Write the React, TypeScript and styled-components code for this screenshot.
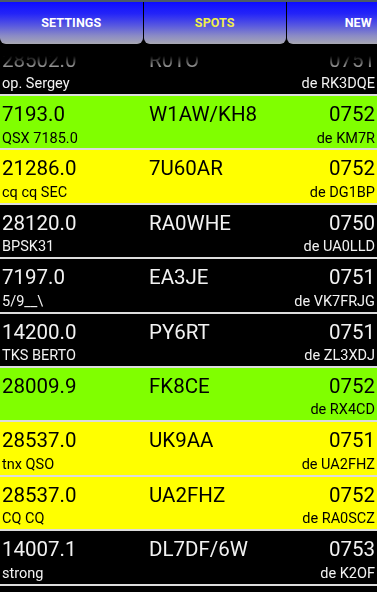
import React from "react";
import styled, { createGlobalStyle, css } from "styled-components";

const Global = createGlobalStyle`
  html, body { margin: 0; padding: 0; background: #000; }
  body { font-family: Roboto, "Liberation Sans", sans-serif; overflow: hidden; }
`;

type Tone = "black" | "green" | "yellow";

interface Spot {
  freq: string;
  call: string;
  time: string;
  comment: string;
  spotter: string;
  tone: Tone;
}

const spots: Spot[] = [
  { freq: "28502.0", call: "R0TO", time: "0751", comment: "op. Sergey", spotter: "RK3DQE", tone: "black" },
  { freq: "7193.0", call: "W1AW/KH8", time: "0752", comment: "QSX 7185.0", spotter: "KM7R", tone: "green" },
  { freq: "21286.0", call: "7U60AR", time: "0752", comment: "cq cq SEC", spotter: "DG1BP", tone: "yellow" },
  { freq: "28120.0", call: "RA0WHE", time: "0750", comment: "BPSK31", spotter: "UA0LLD", tone: "black" },
  { freq: "7197.0", call: "EA3JE", time: "0751", comment: "5/9__\\", spotter: "VK7FRJG", tone: "black" },
  { freq: "14200.0", call: "PY6RT", time: "0751", comment: "TKS BERTO", spotter: "ZL3XDJ", tone: "black" },
  { freq: "28009.9", call: "FK8CE", time: "0752", comment: "", spotter: "RX4CD", tone: "green" },
  { freq: "28537.0", call: "UK9AA", time: "0751", comment: "tnx QSO", spotter: "UA2FHZ", tone: "yellow" },
  { freq: "28537.0", call: "UA2FHZ", time: "0752", comment: "CQ CQ", spotter: "RA0SCZ", tone: "yellow" },
  { freq: "14007.1", call: "DL7DF/6W", time: "0753", comment: "strong", spotter: "K2OF", tone: "black" },
];

const toneBg: Record<Tone, string> = {
  black: "#000000",
  green: "#80ff00",
  yellow: "#ffff00",
};
const toneFg: Record<Tone, string> = {
  black: "#f2f2f2",
  green: "#000000",
  yellow: "#000000",
};

const Screen = styled.div`
  width: 377px;
  height: 592px;
  display: flex;
  flex-direction: column;
  background: #000;
  overflow: hidden;
`;

const Header = styled.div`
  flex: 0 0 auto;
  height: 44px;
  display: flex;
  flex-direction: column;
  background: #000;
  position: relative;
  z-index: 1;
`;

const TopLine = styled.div`
  height: 2px;
  background: #4c5a66;
`;

const TabStrip = styled.div`
  flex: 1;
  display: flex;
  overflow: hidden;
  gap: 1px;
`;

const Tab = styled.div<{ $active?: boolean }>`
  flex: 0 0 142.5px;
  display: flex;
  align-items: center;
  justify-content: center;
  border-radius: 0 0 6px 6px;
  background: linear-gradient(
    to bottom,
    #0c0cff 0%,
    #2424f8 28%,
    #5656e0 55%,
    #8a8ac6 80%,
    #a8a8b2 100%
  );
  color: ${(p) => (p.$active ? "#f0f048" : "#ffffff")};
  font-family: Roboto, "Liberation Sans", sans-serif;
  font-weight: 700;
  font-size: 12.5px;
  letter-spacing: 0.1px;
  padding-bottom: 1px;
`;

const Viewport = styled.div`
  flex: 1;
  overflow: hidden;
  -webkit-mask-image: linear-gradient(to bottom, transparent 12px, rgba(0, 0, 0, 0.6) 22px, #000 32px);
  mask-image: linear-gradient(to bottom, transparent 12px, rgba(0, 0, 0, 0.6) 22px, #000 32px);
`;

const List = styled.div`
  margin-top: -2.4px;
  display: flex;
  flex-direction: column;
`;

const Row = styled.div<{ $tone: Tone }>`
  box-sizing: border-box;
  height: 54.4px;
  padding: 6px 2px 0 2px;
  border-bottom: 2px solid #dcdcdc;
  display: grid;
  grid-template-columns: 147px 1fr auto;
  grid-template-rows: 24px 17px;
  row-gap: 3.5px;
  align-items: center;
  ${(p) => css`
    background: ${toneBg[p.$tone]};
    color: ${toneFg[p.$tone]};
  `}
`;

const Big = styled.div<{ $right?: boolean }>`
  font-size: 20.5px;
  line-height: 24px;
  white-space: nowrap;
  text-align: ${(p) => (p.$right ? "right" : "left")};
`;

const Small = styled.div<{ $right?: boolean; $span?: boolean }>`
  font-size: 14.5px;
  line-height: 17px;
  white-space: nowrap;
  text-align: ${(p) => (p.$right ? "right" : "left")};
  ${(p) => (p.$span ? "grid-column: 1 / 3;" : "")}
`;

export default function App() {
  return (
    <>
      <Global />
      <Screen>
        <Header>
          <TopLine />
          <TabStrip>
            <Tab>SETTINGS</Tab>
            <Tab $active>SPOTS</Tab>
            <Tab>NEW</Tab>
          </TabStrip>
        </Header>
        <Viewport>
          <List>
            {spots.map((s, i) => (
              <Row key={i} $tone={s.tone}>
                <Big>{s.freq}</Big>
                <Big>{s.call}</Big>
                <Big $right>{s.time}</Big>
                <Small $span>{s.comment}</Small>
                <Small $right>de {s.spotter}</Small>
              </Row>
            ))}
          </List>
        </Viewport>
      </Screen>
    </>
  );
}
